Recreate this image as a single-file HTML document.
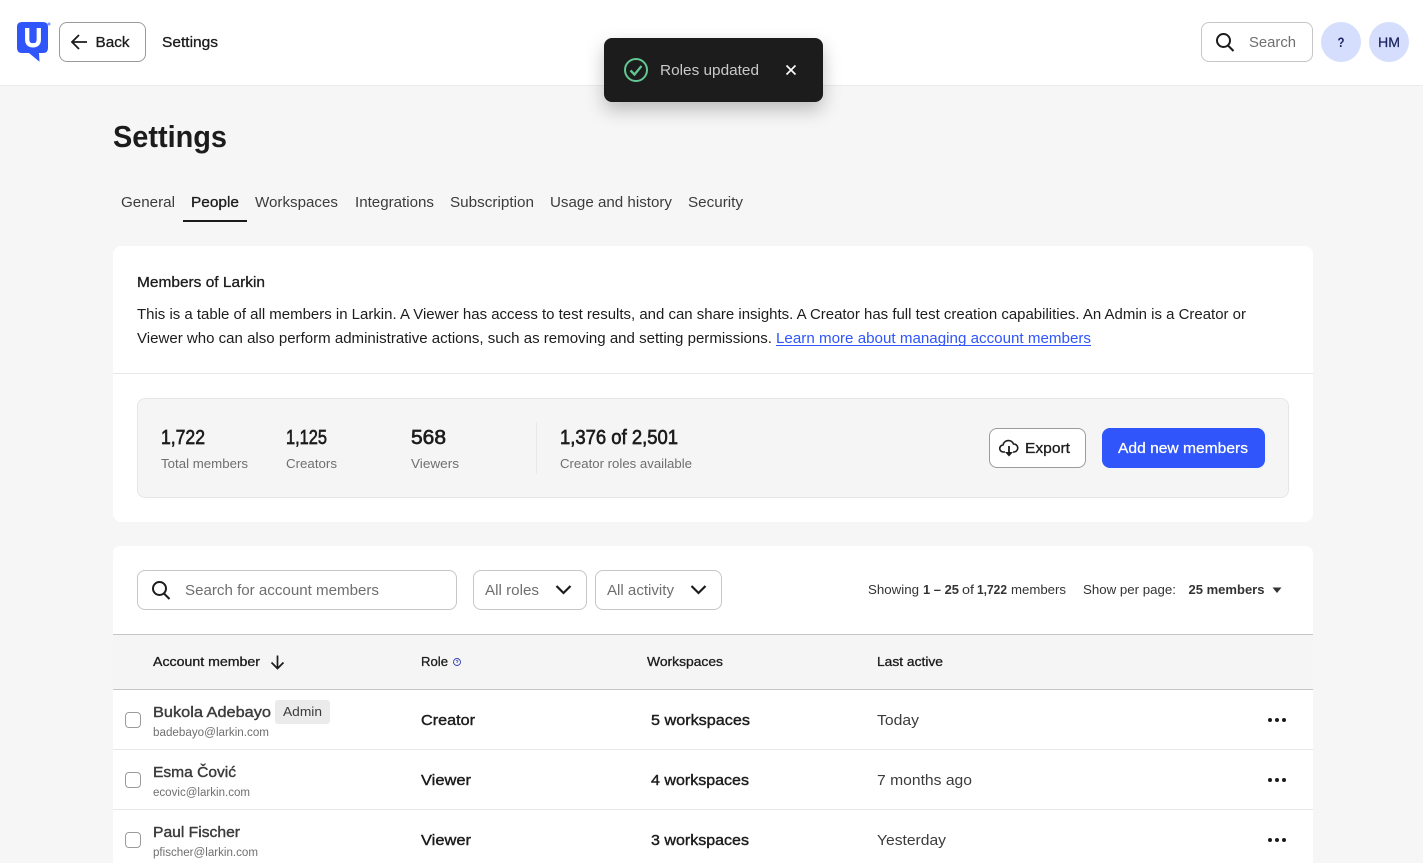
<!DOCTYPE html>
<html lang="en"><head><meta charset="utf-8"><title>Settings</title>
<style>
html,body{margin:0;padding:0;width:1423px;height:863px;overflow:hidden;background:#f6f6f6}
svg{display:block}
text{font-family:"Liberation Sans",sans-serif;fill:#1c1c1c;font-size:15px;white-space:pre}
.m{stroke:#1c1c1c;stroke-width:.3}
.n{stroke:#1c1c1c;stroke-width:.65;font-size:20px}
.g{fill:#6f6f6f}
.d{fill:#3c3c3c}
.s{font-size:13px}
.x{font-size:11.5px;fill:#6f6f6f}
</style></head><body>
<svg xmlns="http://www.w3.org/2000/svg" width="1423" height="863" viewBox="0 0 1423 863">
<defs>
<filter id="sh" x="-30%" y="-50%" width="160%" height="220%"><feDropShadow dx="0" dy="8" stdDeviation="9" flood-color="#000" flood-opacity=".24"/></filter>
</defs>
<rect width="1423" height="863" fill="#f6f6f6"/>
<!-- header -->
<rect width="1423" height="85" fill="#fff"/><rect y="85" width="1423" height="1" fill="#ebebeb"/>
<path d="M22 22h21q5 0 5 5v21q0 5-5 5h-4l.5 8.700L29 53h-7q-5 0-5-5V27q0-5 5-5z" fill="#2f55fb"/>
<path d="M27.200 28v11.500q0 5.800 5.800 5.800t5.800-5.800V28" fill="none" stroke="#fff" stroke-width="4.300"/>
<circle cx="49" cy="24" r="1.500" fill="#7f97f8"/>
<rect x="59.500" y="22.500" width="86" height="39" rx="7.500" fill="#fff" stroke="#9b9b9b"/>
<path d="M87 42H72M79 35l-7 7 7 7" fill="none" stroke="#1c1c1c" stroke-width="1.800"/>
<text x="95.500" y="47" class="m" textLength="34" lengthAdjust="spacingAndGlyphs">Back</text>
<text x="162" y="47" class="m" textLength="56" lengthAdjust="spacingAndGlyphs">Settings</text>
<rect x="1201.500" y="22.500" width="111" height="39" rx="7.500" fill="#fff" stroke="#c6c6c6"/>
<circle cx="1223.500" cy="40.500" r="6.500" fill="none" stroke="#1c1c1c" stroke-width="2"/><path d="M1228 45.500l5.500 5.500" stroke="#1c1c1c" stroke-width="2"/>
<text x="1249" y="47" class="g" textLength="47" lengthAdjust="spacingAndGlyphs">Search</text>
<circle cx="1341" cy="42" r="20" fill="#d5defc"/><circle cx="1389" cy="42" r="20" fill="#d5defc"/>
<text x="1337.500" y="47" style="font-size:14px;fill:#1b2560" font-weight="700" textLength="7" lengthAdjust="spacingAndGlyphs">?</text>
<text x="1378" y="47" style="font-size:13.500px;fill:#1b2560;stroke:#1b2560;stroke-width:.2" textLength="22" lengthAdjust="spacingAndGlyphs">HM</text>
<!-- title & tabs -->
<text x="113" y="147" font-weight="700" style="font-size:31px" textLength="114" lengthAdjust="spacingAndGlyphs">Settings</text>
<text x="121" y="207" class="d" textLength="54" lengthAdjust="spacingAndGlyphs">General</text>
<text x="191" y="207" class="m" textLength="48" lengthAdjust="spacingAndGlyphs">People</text>
<rect x="183" y="220" width="64" height="2" fill="#1c1c1c"/>
<text x="255" y="207" class="d" textLength="83" lengthAdjust="spacingAndGlyphs">Workspaces</text>
<text x="355" y="207" class="d" textLength="79" lengthAdjust="spacingAndGlyphs">Integrations</text>
<text x="450" y="207" class="d" textLength="84" lengthAdjust="spacingAndGlyphs">Subscription</text>
<text x="550" y="207" class="d" textLength="122" lengthAdjust="spacingAndGlyphs">Usage and history</text>
<text x="688" y="207" class="d" textLength="55" lengthAdjust="spacingAndGlyphs">Security</text>
<!-- card 1 -->
<rect x="113" y="246" width="1200" height="276" rx="8" fill="#fff"/>
<text x="137" y="287" class="m" textLength="128" lengthAdjust="spacingAndGlyphs">Members of Larkin</text>
<text x="137" y="319" textLength="1109" lengthAdjust="spacingAndGlyphs">This is a table of all members in Larkin. A Viewer has access to test results, and can share insights. A Creator has full test creation capabilities. An Admin is a Creator or</text>
<text x="137" y="343" textLength="635" lengthAdjust="spacingAndGlyphs">Viewer who can also perform administrative actions, such as removing and setting permissions.</text>
<text x="776" y="343" style="fill:#2f55fb" textLength="315" lengthAdjust="spacingAndGlyphs">Learn more about managing account members</text>
<rect x="776" y="345" width="315" height="1" fill="#2f55fb"/>
<rect x="113" y="373" width="1200" height="1" fill="#e8e8e8"/>
<rect x="137.500" y="398.500" width="1151" height="99" rx="7.500" fill="#f5f5f5" stroke="#e6e6e6"/>
<text x="161" y="444" class="n" textLength="44" lengthAdjust="spacingAndGlyphs">1,722</text>
<text x="286" y="444" class="n" textLength="41" lengthAdjust="spacingAndGlyphs">1,125</text>
<text x="411" y="444" class="n" textLength="35" lengthAdjust="spacingAndGlyphs">568</text>
<text x="560" y="444" class="n" textLength="118" lengthAdjust="spacingAndGlyphs">1,376 of 2,501</text>
<text x="161" y="468" class="g s" textLength="87" lengthAdjust="spacingAndGlyphs">Total members</text>
<text x="286" y="468" class="g s" textLength="51" lengthAdjust="spacingAndGlyphs">Creators</text>
<text x="411" y="468" class="g s" textLength="48" lengthAdjust="spacingAndGlyphs">Viewers</text>
<text x="560" y="468" class="g s" textLength="132" lengthAdjust="spacingAndGlyphs">Creator roles available</text>
<rect x="536" y="422" width="1" height="52" fill="#e8e8e8"/>
<rect x="989.500" y="428.500" width="96" height="39" rx="7.500" fill="#fff" stroke="#9b9b9b"/>
<path d="M1005 452h-1.500a3.500 3.500 0 0 1-.5-7a5.500 5.500 0 0 1 10.500-1a4 4 0 0 1 .5 8h-1" fill="none" stroke="#1c1c1c" stroke-width="1.600"/>
<path d="M1009 446v7" fill="none" stroke="#1c1c1c" stroke-width="1.800"/><path d="M1005 452h8l-4 4.500z" fill="#1c1c1c"/>
<text x="1025" y="453" class="m" textLength="45" lengthAdjust="spacingAndGlyphs">Export</text>
<rect x="1102" y="428" width="163" height="40" rx="8" fill="#2f55fb"/>
<text x="1118" y="453" style="fill:#fff;stroke:#fff;stroke-width:.25" textLength="130" lengthAdjust="spacingAndGlyphs">Add new members</text>
<!-- card 2 -->
<path d="M113 863V554q0-8 8-8h1184q8 0 8 8v309z" fill="#fff"/>
<rect x="137.500" y="570.500" width="319" height="39" rx="7.500" fill="#fff" stroke="#c6c6c6"/>
<circle cx="159.500" cy="588.500" r="6.500" fill="none" stroke="#1c1c1c" stroke-width="2"/><path d="M164 593.500l5.500 5.500" stroke="#1c1c1c" stroke-width="2"/>
<text x="185" y="595" class="g" textLength="194" lengthAdjust="spacingAndGlyphs">Search for account members</text>
<rect x="473.500" y="570.500" width="113" height="39" rx="7.500" fill="#fff" stroke="#c6c6c6"/>
<text x="485" y="595" class="g" textLength="54" lengthAdjust="spacingAndGlyphs">All roles</text>
<path d="M556.500 586l7 7 7-7" fill="none" stroke="#1c1c1c" stroke-width="2.200"/>
<rect x="595.500" y="570.500" width="126" height="39" rx="7.500" fill="#fff" stroke="#c6c6c6"/>
<text x="607" y="595" class="g" textLength="67" lengthAdjust="spacingAndGlyphs">All activity</text>
<path d="M691.500 586l7 7 7-7" fill="none" stroke="#1c1c1c" stroke-width="2.200"/>
<text x="868" y="594" class="s" style="fill:#333" textLength="51" lengthAdjust="spacingAndGlyphs">Showing</text>
<text x="923" y="594" class="s" font-weight="700" style="fill:#333" textLength="36" lengthAdjust="spacingAndGlyphs">1 – 25</text>
<text x="962" y="594" class="s" style="fill:#333" textLength="12" lengthAdjust="spacingAndGlyphs">of</text>
<text x="977" y="594" class="s" font-weight="700" style="fill:#333" textLength="30" lengthAdjust="spacingAndGlyphs">1,722</text>
<text x="1011" y="594" class="s" style="fill:#333" textLength="55" lengthAdjust="spacingAndGlyphs">members</text>
<text x="1083" y="594" class="s" style="fill:#333" textLength="93" lengthAdjust="spacingAndGlyphs">Show per page:</text>
<text x="1188.500" y="594" class="s" font-weight="700" style="fill:#333" textLength="76" lengthAdjust="spacingAndGlyphs">25 members</text>
<path d="M1272.500 587.500h9l-4.500 5.500z" fill="#333"/>
<!-- table header -->
<rect x="113" y="634" width="1200" height="56" fill="#f5f5f5"/>
<rect x="113" y="634" width="1200" height="1" fill="#c6c6c6"/><rect x="113" y="689" width="1200" height="1" fill="#c6c6c6"/>
<text x="153" y="666" class="s m" textLength="107" lengthAdjust="spacingAndGlyphs">Account member</text>
<path d="M277.500 655.500v12M271.500 662.500l6 6 6-6" fill="none" stroke="#1c1c1c" stroke-width="1.700"/>
<text x="421" y="666" class="s m" textLength="27" lengthAdjust="spacingAndGlyphs">Role</text>
<circle cx="457" cy="662" r="3.500" fill="none" stroke="#2f3fb0" stroke-width=".9"/><path d="M456 661q1-1.300 2 0q0 1-1 1.300v.7" fill="none" stroke="#2f3fb0" stroke-width=".7"/>
<text x="647" y="666" class="s m" textLength="76" lengthAdjust="spacingAndGlyphs">Workspaces</text>
<text x="877" y="666" class="s m" textLength="66" lengthAdjust="spacingAndGlyphs">Last active</text>
<!-- rows -->
<rect x="113" y="749" width="1200" height="1" fill="#e8e8e8"/><rect x="113" y="809" width="1200" height="1" fill="#e8e8e8"/>
<g fill="#fff" stroke="#9b9b9b"><rect x="125.500" y="712.500" width="15" height="15" rx="3.500"/><rect x="125.500" y="772.500" width="15" height="15" rx="3.500"/><rect x="125.500" y="832.500" width="15" height="15" rx="3.500"/></g>
<text x="153" y="717" class="d m" style="stroke:#3c3c3c;stroke-width:.4" textLength="118" lengthAdjust="spacingAndGlyphs">Bukola Adebayo</text>
<rect x="275" y="700" width="55" height="24" rx="3" fill="#ebebeb"/>
<text x="283" y="716" class="s d" textLength="39" lengthAdjust="spacingAndGlyphs">Admin</text>
<text x="153" y="736" class="x" textLength="116" lengthAdjust="spacingAndGlyphs">badebayo@larkin.com</text>
<text x="421" y="725" class="m" style="stroke-width:.4" textLength="54" lengthAdjust="spacingAndGlyphs">Creator</text>
<text x="651" y="725" class="m" style="stroke-width:.4" textLength="99" lengthAdjust="spacingAndGlyphs">5 workspaces</text>
<text x="877" y="725" class="d" textLength="42" lengthAdjust="spacingAndGlyphs">Today</text>
<text x="153" y="777" class="d m" style="stroke:#3c3c3c;stroke-width:.4" textLength="83" lengthAdjust="spacingAndGlyphs">Esma Čović</text>
<text x="153" y="796" class="x" textLength="97" lengthAdjust="spacingAndGlyphs">ecovic@larkin.com</text>
<text x="421" y="785" class="m" style="stroke-width:.4" textLength="50" lengthAdjust="spacingAndGlyphs">Viewer</text>
<text x="651" y="785" class="m" style="stroke-width:.4" textLength="98" lengthAdjust="spacingAndGlyphs">4 workspaces</text>
<text x="877" y="785" class="d" textLength="95" lengthAdjust="spacingAndGlyphs">7 months ago</text>
<text x="153" y="837" class="d m" style="stroke:#3c3c3c;stroke-width:.4" textLength="87" lengthAdjust="spacingAndGlyphs">Paul Fischer</text>
<text x="153" y="856" class="x" textLength="105" lengthAdjust="spacingAndGlyphs">pfischer@larkin.com</text>
<text x="421" y="845" class="m" style="stroke-width:.4" textLength="50" lengthAdjust="spacingAndGlyphs">Viewer</text>
<text x="651" y="845" class="m" style="stroke-width:.4" textLength="98" lengthAdjust="spacingAndGlyphs">3 workspaces</text>
<text x="877" y="845" class="d" textLength="69" lengthAdjust="spacingAndGlyphs">Yesterday</text>
<g fill="#1c1c1c"><circle cx="1270" cy="720" r="2"/><circle cx="1277" cy="720" r="2"/><circle cx="1284" cy="720" r="2"/><circle cx="1270" cy="780" r="2"/><circle cx="1277" cy="780" r="2"/><circle cx="1284" cy="780" r="2"/><circle cx="1270" cy="840" r="2"/><circle cx="1277" cy="840" r="2"/><circle cx="1284" cy="840" r="2"/></g>
<!-- toast -->
<rect x="604" y="38" width="219" height="64" rx="8" fill="#1b1b1b" filter="url(#sh)"/>
<circle cx="636" cy="70" r="11" fill="none" stroke="#62c792" stroke-width="2"/>
<path d="M630.500 70.500l4 4 7-8.500" fill="none" stroke="#62c792" stroke-width="2.300"/>
<text x="660" y="75" style="fill:#c9c9c9" textLength="99" lengthAdjust="spacingAndGlyphs">Roles updated</text>
<path d="M786.500 65.500l9 9M795.500 65.500l-9 9" stroke="#fff" stroke-width="1.600"/>
</svg>
</body></html>
